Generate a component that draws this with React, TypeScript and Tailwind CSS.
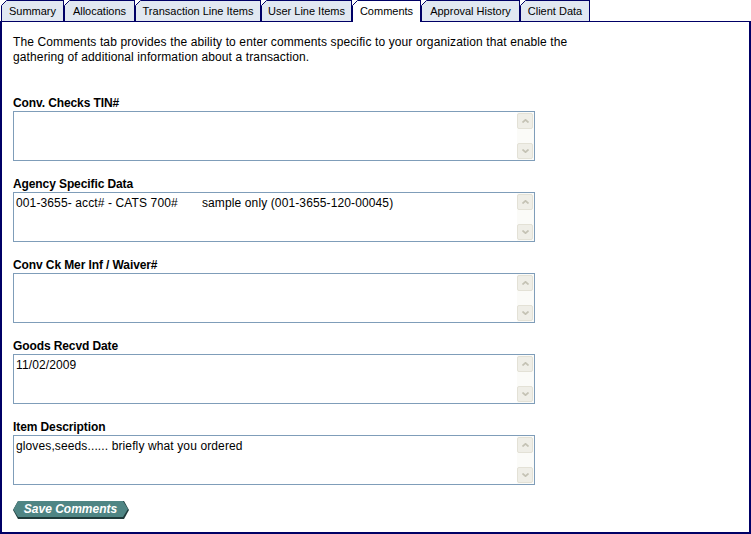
import React from "react";

const tabs = [
  { text: "Summary", w: "w-[63px]" },
  { text: "Allocations", w: "w-[71px]" },
  { text: "Transaction Line Items", w: "w-[126px]" },
  { text: "User Line Items", w: "w-[91px]" },
  { text: "Comments", w: "w-[69px]", active: true },
  { text: "Approval History", w: "w-[99px]" },
  { text: "Client Data", w: "w-[70px]" },
];

const fields = [
  { label: "Conv. Checks TIN#", value: "" },
  {
    label: "Agency Specific Data",
    value: "001-3655- acct# - CATS 700#       sample only (001-3655-120-00045)",
  },
  { label: "Conv Ck Mer Inf / Waiver#", value: "" },
  { label: "Goods Recvd Date", value: "11/02/2009" },
  { label: "Item Description", value: "gloves,seeds...... briefly what you ordered" },
];

const Arrow = ({ up }: { up?: boolean }) => (
  <svg width="7" height="4" viewBox="0 0 7 4">
    <polyline
      points={up ? "0.5,3.5 3.5,0.8 6.5,3.5" : "0.5,0.5 3.5,3.2 6.5,0.5"}
      fill="none"
      stroke="#c4c2b4"
      strokeWidth="1.7"
    />
  </svg>
);

const Field = ({ label, value }: { label: string; value: string }) => (
  <div className="flex flex-col">
    <label className="font-bold text-[12px] leading-[16px] tracking-[-0.1px]">{label}</label>
    <div className="flex w-[522px] h-[50px] border border-[#7f9db9] bg-white">
      <textarea
        readOnly
        value={value}
        className="flex-1 resize-none outline-none overflow-hidden px-[2px] pt-[3px] text-[12px] leading-[15px] tracking-[0.12px] whitespace-pre text-black"
        style={{ fontFamily: '"Liberation Sans", Arial, sans-serif' }}
      />
      <div className="w-[17px] flex flex-col justify-between bg-[#fbfbf8] py-px pr-px">
        <div className="h-[16px] rounded-[2px] border border-[#e3e1d6] bg-[#efeee7] flex items-center justify-center">
          <Arrow up />
        </div>
        <div className="h-[16px] rounded-[2px] border border-[#e3e1d6] bg-[#efeee7] flex items-center justify-center">
          <Arrow />
        </div>
      </div>
    </div>
  </div>
);

export default function App() {
  return (
    <div
      className="w-[751px] h-[534px] bg-white text-black flex flex-col"
      style={{ fontFamily: '"Liberation Sans", Arial, sans-serif' }}
    >
      <div className="flex h-[21px] pl-px">
        {tabs.map((t, i) => (
          <div
            key={i}
            className={`relative ${t.w} h-[21px] border border-b-0 border-[#000066] flex items-center justify-center text-[11px] ${
              t.active ? "bg-white h-[22px] z-10" : "bg-[#e1e8f1]"
            }`}
          >
            <svg className="absolute -left-px -top-px" width="6" height="6" viewBox="0 0 6 6">
              <polygon points="0,0 6,0 0,6" fill="#ffffff" />
              <line x1="0.5" y1="5.5" x2="5.5" y2="0.5" stroke="#000066" strokeWidth="1" />
            </svg>
            {t.text}
          </div>
        ))}
      </div>
      <div className="flex-1 border-l-2 border-r-2 border-b-2 border-t border-[#000066] px-[11px] pt-[13px] flex flex-col">
        <p className="text-[12px] leading-[15px] w-[600px] tracking-[0.12px]">
          The Comments tab provides the ability to enter comments specific to your organization that enable the
          <br />
          gathering of additional information about a transaction.
        </p>
        <div className="flex flex-col gap-[15px] mt-[30px]">
          {fields.map((f, i) => (
            <Field key={i} label={f.label} value={f.value} />
          ))}
        </div>
        <div className="mt-[16px]">
          <div
            className="w-[116px] h-[18px] bg-[#1f3a3a] pb-[2px] pr-px"
            style={{ clipPath: "polygon(5px 0, calc(100% - 5px) 0, 100% 50%, calc(100% - 5px) 100%, 5px 100%, 0 50%)" }}
          >
            <div
              className="h-full bg-[#4f8584] flex items-center justify-center text-white font-bold italic text-[12px]"
              style={{ clipPath: "polygon(5px 0, calc(100% - 5px) 0, 100% 50%, calc(100% - 5px) 100%, 5px 100%, 0 50%)" }}
            >
              Save Comments
            </div>
          </div>
        </div>
      </div>
    </div>
  );
}
